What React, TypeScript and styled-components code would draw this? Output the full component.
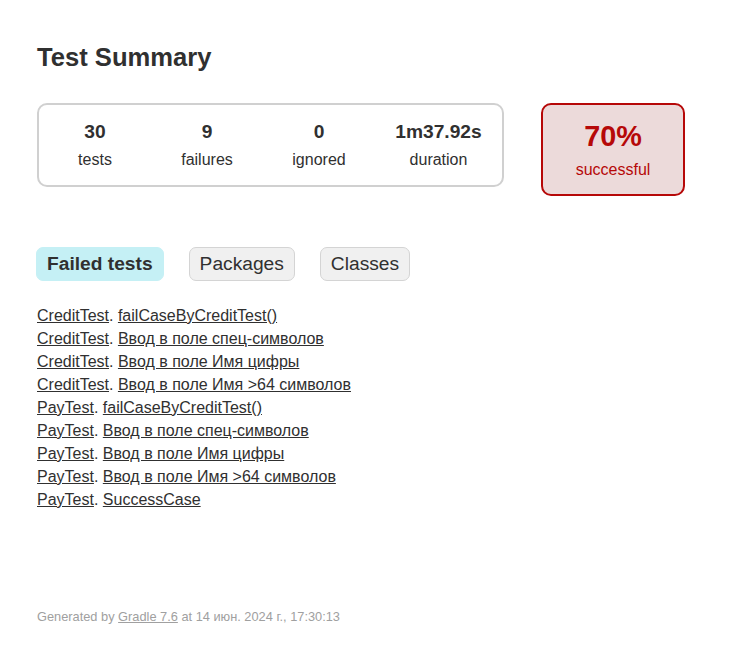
import React from "react";
import styled, { createGlobalStyle } from "styled-components";

const GlobalStyle = createGlobalStyle`
  html, body {
    margin: 0;
    padding: 0;
    background: #ffffff;
  }
  body {
    font-family: "Liberation Sans", Arial, sans-serif;
    font-size: 16px;
    color: #303030;
  }
`;

const Page = styled.div`
  padding: 30px 37px;
`;

const Title = styled.h1`
  font-size: 25.6px;
  font-weight: bold;
  margin: 13px 0 0;
  white-space: nowrap;
`;

const SummaryRow = styled.div`
  display: flex;
  align-items: flex-start;
  margin-top: 31px;
`;

const SummaryGroup = styled.div`
  display: flex;
  border: solid 2px #d0d0d0;
  border-radius: 10px;
`;

const InfoBox = styled.div<{ $wide?: boolean }>`
  width: ${(p) => (p.$wide ? 125 : 110)}px;
  margin: 1px;
  padding: 15px 0;
  text-align: center;
`;

const Counter = styled.p`
  margin: 0 0 8px;
  font-size: 19.2px;
  font-weight: bold;
`;

const Label = styled.p`
  margin: 0;
`;

const SuccessRate = styled.div`
  width: 140px;
  margin-left: 37px;
  padding: 15px 0;
  text-align: center;
  border: solid 2px #b60808;
  border-radius: 10px;
  background-color: #ecdada;
  color: #b60808;
`;

const Percent = styled.p`
  margin: 0 0 8px;
  font-size: 28.8px;
  font-weight: bold;
`;

const TabLinks = styled.ul`
  display: flex;
  list-style: none;
  margin: 41px 0 0 -1px;
  padding: 10px 0;
`;

const Tab = styled.li<{ $selected?: boolean }>`
  padding: 5px 10px;
  margin-right: 25px;
  border-radius: 7px;
  border: solid 1px ${(p) => (p.$selected ? "#c5f0f5" : "#d4d4d4")};
  background-color: ${(p) => (p.$selected ? "#c5f0f5" : "#f0f0f0")};
`;

const TabLink = styled.a<{ $selected?: boolean }>`
  display: block;
  font-size: 19.2px;
  font-weight: ${(p) => (p.$selected ? "bold" : "normal")};
  text-decoration: none;
  color: #303030;
`;

const LinkList = styled.ul`
  list-style: none;
  margin: 16px 0 0;
  padding: 0;
`;

const LinkItem = styled.li`
  margin-bottom: 5px;
`;

const Link = styled.a`
  color: #303030;
  text-decoration: underline;
`;

const Footer = styled.div`
  margin-top: 100px;
  font-size: 12.8px;
  white-space: nowrap;
  color: #a0a0a0;
`;

const FooterLink = styled.a`
  color: #a0a0a0;
  text-decoration: underline;
`;

const stats = [
  { value: "30", label: "tests" },
  { value: "9", label: "failures" },
  { value: "0", label: "ignored" },
  { value: "1m37.92s", label: "duration", wide: true },
];

const failed: [string, string][] = [
  ["CreditTest", "failCaseByCreditTest()"],
  ["CreditTest", "Ввод в поле спец-символов"],
  ["CreditTest", "Ввод в поле Имя цифры"],
  ["CreditTest", "Ввод в поле Имя >64 символов"],
  ["PayTest", "failCaseByCreditTest()"],
  ["PayTest", "Ввод в поле спец-символов"],
  ["PayTest", "Ввод в поле Имя цифры"],
  ["PayTest", "Ввод в поле Имя >64 символов"],
  ["PayTest", "SuccessCase"],
];

const tabs = ["Failed tests", "Packages", "Classes"];

export default function App() {
  return (
    <>
      <GlobalStyle />
      <Page>
        <Title>Test Summary</Title>
        <SummaryRow>
          <SummaryGroup>
            {stats.map((s) => (
              <InfoBox key={s.label} $wide={s.wide}>
                <Counter>{s.value}</Counter>
                <Label>{s.label}</Label>
              </InfoBox>
            ))}
          </SummaryGroup>
          <SuccessRate>
            <Percent>70%</Percent>
            <Label>successful</Label>
          </SuccessRate>
        </SummaryRow>
        <TabLinks>
          {tabs.map((t, i) => (
            <Tab key={t} $selected={i === 0}>
              <TabLink href="#" $selected={i === 0}>
                {t}
              </TabLink>
            </Tab>
          ))}
        </TabLinks>
        <LinkList>
          {failed.map(([cls, name], i) => (
            <LinkItem key={i}>
              <Link href="#">{cls}</Link>. <Link href="#">{name}</Link>
            </LinkItem>
          ))}
        </LinkList>
        <Footer>
          Generated by <FooterLink href="#">Gradle 7.6</FooterLink> at 14 июн. 2024 г., 17:30:13
        </Footer>
      </Page>
    </>
  );
}
